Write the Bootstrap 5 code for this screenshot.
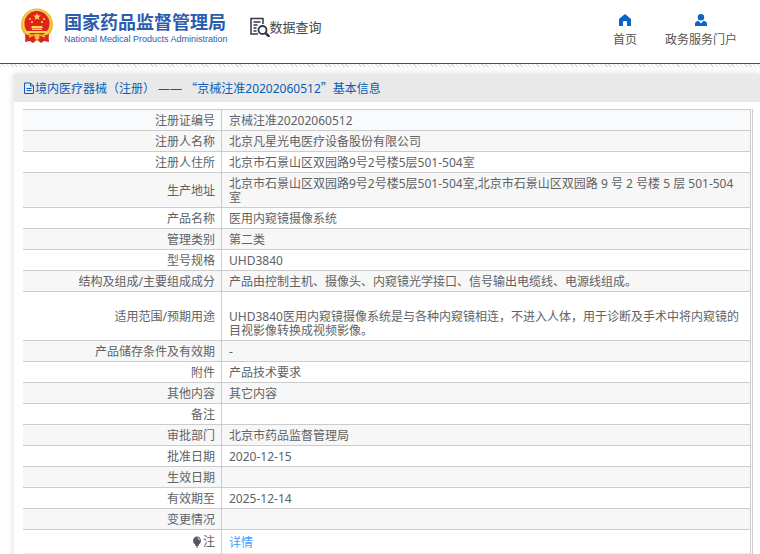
<!DOCTYPE html>
<html lang="zh-CN">
<head>
<meta charset="utf-8">
<meta name="viewport" content="width=device-width, initial-scale=1">
<title>国家药品监督管理局 数据查询</title>
<link href="https://cdn.jsdelivr.net/npm/bootstrap@5.3.0/dist/css/bootstrap.min.css" rel="stylesheet">
<style>
body { font-family: "Noto Sans", "Noto Sans CJK SC", sans-serif; font-size: 12px; line-height: 14px; color: #606266; overflow: hidden; }
.site-head { height: 64px; border-bottom: 1px solid #0a5cb0; padding: 0 23px 0 20px; }
.hatch { height: 3px; background: repeating-linear-gradient(45deg, #ddd 0 1px, #fff 1px 3px); }
.brand { gap: 10px; padding-top: 8px; color: #2b5cae; }
.brand:hover { color: #2b5cae; }
.brand-cn { font-family: "Noto Sans CJK SC", sans-serif; font-weight: 700; font-size: 18px; line-height: 26px; }
.brand-en { font-family: "Liberation Sans", sans-serif; font-size: 9px; line-height: 10px; }
.query { margin-left: 22px; padding-top: 17px; font-size: 13px; line-height: 20px; color: #44464e; }
.top-nav { gap: 28px; padding-top: 14px; font-size: 12px; line-height: 18px; }
.top-nav .nav-link { padding: 0; color: #555; gap: 5px; }
.panel { margin: 7px 0 0 14px; box-shadow: 0 0 8px rgba(0,0,0,.15); }
.panel-title { background: #e9e9e9; color: #0a5cb8; font-size: 12px; line-height: 27px; padding-left: 9px; font-weight: 400; }
.wide { font-family: "Noto Sans CJK SC", sans-serif; }
.panel-main { padding: 7px 7px 12px 9px; }
.table-frame { border-right: 1px solid #ccc; padding-right: 1px; }
.info { --bs-table-color: #606266; border-collapse: separate; border-spacing: 0; border-top: 1px solid #ccc; border-right: 1px solid #ccc; table-layout: fixed; color: #606266; }
.info > tbody > tr > * { padding: 4px 7px 2px 7px; border-bottom: 1px solid #ccc; vertical-align: middle; color: #606266; }
.info > tbody > tr > th { width: 199px; padding-right: 6px; border-right: 1px solid #ccc; font-weight: 400; text-align: right; }
.info > tbody > tr > td { height: 21px; }
.info > tbody > tr:nth-child(even) > * { background: #f7f7f7; }
.info > tbody > tr:first-child > * { background: #f9fafc; }
.info > tbody > tr:last-child > * { height: 23px; padding-top: 5px; border-bottom-color: #ebeef5; }
.more { color: #409eff; }
</style>
</head>
<body>
<header class="site-head d-flex align-items-start">
  <a class="brand d-flex text-decoration-none" href="#">
    <svg width="34" height="36" viewBox="0 0 34 36" aria-hidden="true">
      <path d="M6 25 5 34l5-1 3 2 4-3 4 3 3-2 5 1-1-9z" fill="#d9261c"/>
      <circle cx="17" cy="16.500" r="16" fill="#efb62f"/>
      <circle cx="17" cy="16" r="14" fill="none" stroke="#f7d765"/>
      <circle cx="17" cy="15.500" r="12.500" fill="#e0231a"/>
      <path d="m17 5 1 2.600h2.800l-2.200 1.700.8 2.700-2.400-1.600-2.400 1.600.8-2.700-2.200-1.700H16z" fill="#ffd84a"/>
      <g fill="#ffd84a"><circle cx="10" cy="11" r="1"/><circle cx="12" cy="14" r="1"/><circle cx="22" cy="14" r="1"/><circle cx="24" cy="11" r="1"/>
      <path d="M12 18h10l1 2H11zM12 20.500h10v1.500H12zM7 23h20v2H7z"/></g>
      <path d="M5 26c7 3 17 3 24 0l-1 7-4-1-3 2-4-3-4 3-3-2-4 1z" fill="#d9261c"/>
      <path d="M9 29c5-3 11-3 16 0" fill="none" stroke="#f2bd38" stroke-width="1.500"/>
      <circle cx="17" cy="29" r="2.500" fill="#f2bd38"/>
    </svg>
    <span class="d-flex flex-column">
      <span class="brand-cn">国家药品监督管理局</span>
      <span class="brand-en">National Medical Products Administration</span>
    </span>
  </a>
  <div class="query d-flex align-items-center">
    <svg width="20" height="20" viewBox="0 0 20 20" fill="none" stroke="#33384b" aria-hidden="true">
      <path d="M13 7V1.500H1v15.500h7" stroke-width="1.500"/>
      <path d="M3.500 5h7M3.500 8h4M3.500 11h3M3.500 14h3" stroke-width="1.300"/>
      <circle cx="12.500" cy="13" r="4" stroke-width="1.800"/><path d="m15.500 16 4 4" stroke-width="2.500"/>
    </svg>
    <span>数据查询</span>
  </div>
  <nav class="top-nav nav ms-auto flex-nowrap">
    <a class="nav-link d-flex flex-column align-items-center" href="#">
      <svg width="12" height="12" viewBox="0 0 12 12" aria-hidden="true"><path d="M6 0 0 5v7h4V8q0-1 1-1h2q1 0 1 1v4h4V5z" fill="#0b62c9"/></svg>首页</a>
    <a class="nav-link d-flex flex-column align-items-center" href="#">
      <svg width="12" height="12" viewBox="0 0 12 12" fill="#0b62c9" aria-hidden="true"><circle cx="6" cy="3.200" r="3.200"/><path d="M0 12V10q0-2.500 3.500-3.200L6 9.500l2.500-2.700Q12 7.500 12 10v2z"/></svg>政务服务门户</a>
  </nav>
</header>
<div class="hatch"></div>
<main class="panel bg-white">
  <h1 class="panel-title d-flex align-items-center mb-0"><svg width="12" height="12" viewBox="0 0 12 12" fill="none" stroke="#0a5cb8" aria-hidden="true"><path d="M7.500 1H1.500v10.500h9V4zM7.500 1v3h3M3.500 6.500h5M3.500 8.500h5"/></svg><span>境内医疗器械（注册） —— <span class="wide">“</span>京械注准20202060512<span class="wide">”</span>基本信息</span></h1>
  <div class="panel-main">
    <div class="table-frame">
    <table class="table info mb-0">
      <tbody>
        <tr><th scope="row">注册证编号</th><td>京械注准20202060512</td></tr>
        <tr><th scope="row">注册人名称</th><td>北京凡星光电医疗设备股份有限公司</td></tr>
        <tr><th scope="row">注册人住所</th><td>北京市石景山区双园路9号2号楼5层501-504室</td></tr>
        <tr><th scope="row">生产地址</th><td>北京市石景山区双园路9号2号楼5层501-504室,北京市石景山区双园路 9 号 2 号楼 5 层 501-504 室</td></tr>
        <tr><th scope="row">产品名称</th><td>医用内窥镜摄像系统</td></tr>
        <tr><th scope="row">管理类别</th><td>第二类</td></tr>
        <tr><th scope="row">型号规格</th><td>UHD3840</td></tr>
        <tr><th scope="row">结构及组成/主要组成成分</th><td>产品由控制主机、摄像头、内窥镜光学接口、信号输出电缆线、电源线组成。</td></tr>
        <tr><th scope="row">适用范围/预期用途</th><td><br>UHD3840医用内窥镜摄像系统是与各种内窥镜相连，不进入人体，用于诊断及手术中将内窥镜的目视影像转换成视频影像。</td></tr>
        <tr><th scope="row">产品储存条件及有效期</th><td>-</td></tr>
        <tr><th scope="row">附件</th><td>产品技术要求</td></tr>
        <tr><th scope="row">其他内容</th><td>其它内容</td></tr>
        <tr><th scope="row">备注</th><td></td></tr>
        <tr><th scope="row">审批部门</th><td>北京市药品监督管理局</td></tr>
        <tr><th scope="row">批准日期</th><td>2020-12-15</td></tr>
        <tr><th scope="row">生效日期</th><td></td></tr>
        <tr><th scope="row">有效期至</th><td>2025-12-14</td></tr>
        <tr><th scope="row">变更情况</th><td></td></tr>
        <tr><th scope="row"><span class="d-inline-flex align-items-center"><svg width="12" height="12" viewBox="0 0 12 12" aria-hidden="true"><path d="M6 .5a4.200 4.200 0 0 1 2 7.700L7.500 10h-3L4 8.200A4.200 4.200 0 0 1 6 .5zM5 10.500h2v1H5z" fill="#55585e"/><path d="M6.500 2q2 .3 2 2.300" fill="none" stroke="#fff" stroke-width=".8"/></svg>注</span></th><td><a class="more text-decoration-none" href="#">详情</a></td></tr>
      </tbody>
    </table>
    </div>
  </div>
</main>
<script src="https://cdn.jsdelivr.net/npm/bootstrap@5.3.0/dist/js/bootstrap.bundle.min.js"></script>
</body>
</html>
